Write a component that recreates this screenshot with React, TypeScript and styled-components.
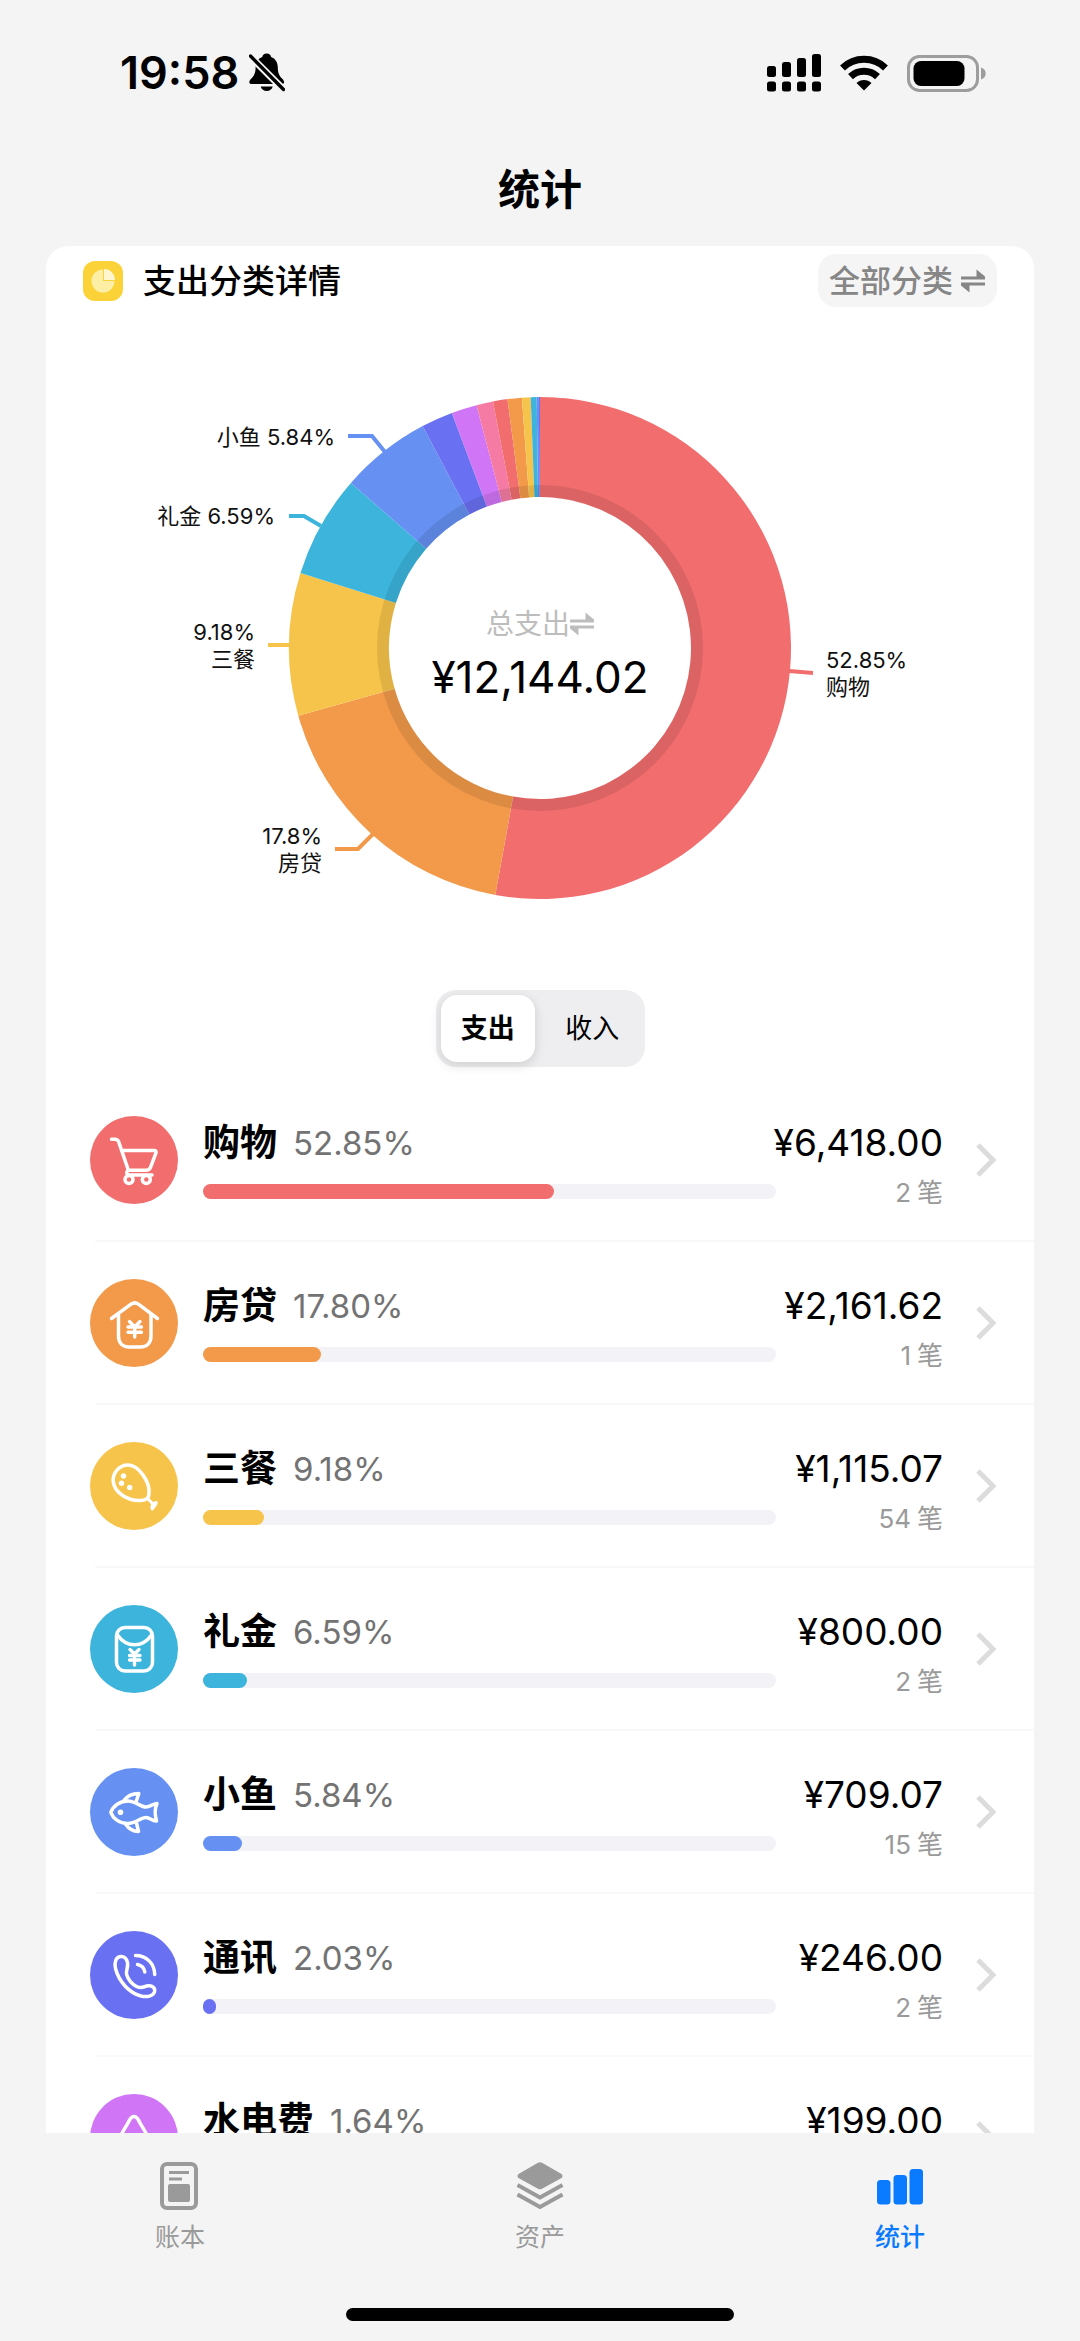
import React, { useState } from "react";
import styled, { createGlobalStyle } from "styled-components";

const colors = {
  page: "#f4f4f4",
  red: "#f26d6d",
  orange: "#f2994a",
  yellow: "#f7c44b",
  cyan: "#3cb4dc",
  blue: "#6690f2",
  indigo: "#6a70f2",
  purple: "#cf75f5",
  pink: "#f57ba4",
  active: "#0a7aff",
  muted: "#9a9a9a",
};

const fontStack = `"Inter", "Noto Sans CJK SC", sans-serif`;

const GlobalStyle = createGlobalStyle`
  *, *::before, *::after { box-sizing: border-box; }
  body { margin: 0; background: ${colors.page}; color: #000; font-family: ${fontStack}; }
  button { font: inherit; color: inherit; border: 0; padding: 0; background: none; cursor: pointer; }
  a { color: inherit; text-decoration: none; }
  h1, h2, p { margin: 0; }
  svg { display: block; }
`;

const Screen = styled.div`
  display: flex;
  flex-direction: column;
  height: 100vh;
  background: ${colors.page};
`;

/* ---------- status bar ---------- */

const StatusBar = styled.div`
  display: flex;
  align-items: center;
  justify-content: space-between;
  height: 146px;
  padding: 0 94px 0 120px;
`;

const StatusGroup = styled.div<{ $gap: number }>`
  display: flex;
  align-items: center;
  gap: ${(p) => p.$gap}px;
`;

const Clock = styled.span`
  font-size: 45px;
  line-height: 54px;
  font-weight: 600;
`;

const BellOffIcon = () => (
  <svg width="36" height="40" viewBox="0 0 36 40" aria-hidden="true">
    <path
      d="M17.7 0.5c-2.6 0-4 1.5-4.4 3.4C9 5.5 6.6 9.4 6.6 14.200c0 6-1.600 8.500-4.200 11.400C.9 27.200.3 28.300.3 29.200c0 1 .8 1.700 2 1.700h30.800c1.200 0 2-.7 2-1.700 0-.9-.6-2-2.100-3.600-2.600-2.900-4.200-5.400-4.200-11.400 0-4.800-2.400-8.700-6.700-10.300C21.700 2 20.300.5 17.700.5z"
      fill="#000"
    />
    <path d="M11.700 33.500h12c-.8 2.800-3 4.500-6 4.500s-5.200-1.700-6-4.500z" fill="#000" />
    <path d="M-1 1L37 39" stroke={colors.page} strokeWidth="7" />
    <path d="M1.500 3L34.500 36.500" stroke="#000" strokeWidth="3.400" strokeLinecap="round" />
  </svg>
);

const SignalIcon = () => (
  <svg width="54" height="38" viewBox="0 0 54 38" aria-hidden="true">
    {[0, 1, 2, 3].map((i) => {
      const height = [11, 15, 19, 23][i];
      return (
        <g key={i}>
          <rect x={i * 15} y={23 - height} width="9" height={height} rx="2.500" />
          <rect x={i * 15} y="27.500" width="9" height="10" rx="2.500" />
        </g>
      );
    })}
  </svg>
);

const WifiIcon = () => (
  <svg width="48" height="36" viewBox="0 0 48 36" aria-hidden="true">
    <g fill="none" stroke="#000" strokeWidth="7">
      <path d="M2.500 13A31 31 0 0 1 45.500 13" />
      <path d="M10.500 21.600A19.500 19.500 0 0 1 37.500 21.600" />
    </g>
    <path d="M24 35.500L16.500 28a10.600 10.600 0 0 1 15 0z" />
  </svg>
);

const BatteryIcon = () => (
  <svg width="79" height="37" viewBox="0 0 79 37" aria-hidden="true">
    <rect x="1.500" y="1.500" width="69" height="34" rx="11" fill="none" stroke="#9d9d9d" strokeWidth="3" />
    <rect x="6.500" y="6" width="51" height="25" rx="7.500" />
    <path d="M74 12.500c3 1 4.700 3 4.700 6s-1.700 5-4.700 6z" fill="#9d9d9d" />
  </svg>
);

/* ---------- title ---------- */

const TitleBar = styled.header`
  display: flex;
  align-items: center;
  justify-content: center;
  height: 100px;
  padding-bottom: 12px;
`;

const Title = styled.h1`
  font-size: 42px;
  line-height: 60px;
  font-weight: 600;
`;

/* ---------- card ---------- */

const Content = styled.main`
  flex: 1;
  min-height: 0;
  margin: 0 46px;
  overflow-y: auto;
  scrollbar-width: none;
  border-radius: 22px 22px 0 0;
  background: #fff;
`;

const CardHeader = styled.div`
  display: flex;
  align-items: center;
  gap: 20px;
  padding: 8px 37px 0;
`;

const CardTitle = styled.h2`
  flex: 1;
  font-size: 33px;
  line-height: 44px;
  font-weight: 500;
`;

const FilterButton = styled.button`
  display: flex;
  align-items: center;
  gap: 8px;
  height: 53px;
  padding: 0 12px 0 11px;
  border-radius: 18px;
  background: #f5f5f5;
  color: #868686;
  font-size: 31px;
  line-height: 40px;
  font-weight: 500;
`;

const PieBadge = () => (
  <svg width="40" height="40" viewBox="0 0 40 40" aria-hidden="true">
    <rect width="40" height="40" rx="12" fill="#fbd338" />
    <path d="M20 8.500a11.500 11.500 0 1 0 11.500 11.500H20z" fill="#fdeea6" />
    <path d="M21 8V19H32A11 11 0 0 0 21 8z" fill="#fff6cf" />
  </svg>
);

const SwapIcon = () => (
  <svg width="24" height="24" viewBox="0 0 24 24" fill="currentColor" aria-hidden="true">
    <path d="M0 7.500H15.500V0.500L24 7.500V10.500H0z" />
    <path d="M24 16.500H8.500V23.500L0 16.500V13.500H24z" />
  </svg>
);

/* ---------- donut chart ---------- */

const slices = [
  { value: 52.85, color: colors.red },
  { value: 17.8, color: colors.orange },
  { value: 9.18, color: colors.yellow },
  { value: 6.59, color: colors.cyan },
  { value: 5.84, color: colors.blue },
  { value: 2.03, color: colors.indigo },
  { value: 1.64, color: colors.purple },
  { value: 1.07, color: colors.pink },
  { value: 0.93, color: colors.red },
  { value: 0.92, color: colors.orange },
  { value: 0.56, color: colors.yellow },
  { value: 0.38, color: colors.cyan },
  { value: 0.14, color: colors.blue },
  { value: 0.07, color: colors.indigo },
];

const CX = 494;
const CY = 341;
const OUTER = 251;
const INNER = 151;

const polar = (radius: number, percent: number) => {
  const angle = (percent / 100) * Math.PI * 2;
  return `${CX + radius * Math.sin(angle)} ${CY - radius * Math.cos(angle)}`;
};

const arcPath = (start: number, end: number) => {
  const large = end - start > 50 ? 1 : 0;
  return [
    `M${polar(OUTER, start)}`,
    `A${OUTER} ${OUTER} 0 ${large} 1 ${polar(OUTER, end)}`,
    `L${polar(INNER, end)}`,
    `A${INNER} ${INNER} 0 ${large} 0 ${polar(INNER, start)}Z`,
  ].join("");
};

const callouts = [
  { line: "M743 364L767 366", color: colors.red, x: 780, anchor: "start", rows: [["52.85%", 361], ["购物", 388]] },
  { line: "M327 527L312 542H289", color: colors.orange, x: 276, anchor: "end", rows: [["17.8%", 537], ["房贷", 564]] },
  { line: "M244 338H222", color: colors.yellow, x: 209, anchor: "end", rows: [["9.18%", 333], ["三餐", 360]] },
  { line: "M275 219L258 209H243", color: colors.cyan, x: 229, anchor: "end", rows: [["礼金 6.59%", 217]] },
  { line: "M339 145L326 129H302", color: colors.blue, x: 289, anchor: "end", rows: [["小鱼 5.84%", 138]] },
] as const;

const ChartArea = styled.div`
  position: relative;
`;

const ChartSvg = styled.svg`
  width: 100%;
  height: auto;
`;

const CalloutText = styled.text`
  font-family: ${fontStack};
  font-size: 22px;
  fill: #111;
`;

const ChartCenter = styled.div`
  position: absolute;
  inset: 0;
  display: flex;
  flex-direction: column;
  align-items: center;
  justify-content: center;
  gap: 10px;
  padding-top: 10px;
`;

const TotalToggle = styled.button`
  display: flex;
  align-items: center;
  color: #bdbdbd;
  font-size: 28px;
  line-height: 36px;
`;

const TotalAmount = styled.p`
  font-size: 44px;
  line-height: 50px;
`;

function DonutChart() {
  let cursor = 0;
  return (
    <ChartArea>
      <ChartSvg viewBox="0 0 988 683" role="img" aria-label="支出分类">
        {slices.map((slice, i) => {
          const start = cursor;
          cursor += slice.value;
          return <path key={i} d={arcPath(start, cursor)} fill={slice.color} />;
        })}
        <circle cx={CX} cy={CY} r="157" fill="none" stroke="#000" strokeOpacity="0.090" strokeWidth="12" />
        {callouts.map((callout) => (
          <g key={callout.color}>
            <path d={callout.line} fill="none" stroke={callout.color} strokeWidth="4" />
            {callout.rows.map(([label, y]) => (
              <CalloutText key={label} x={callout.x} y={y} textAnchor={callout.anchor}>
                {label}
              </CalloutText>
            ))}
          </g>
        ))}
      </ChartSvg>
      <ChartCenter>
        <TotalToggle type="button">
          总支出
          <SwapIcon />
        </TotalToggle>
        <TotalAmount>¥12,144.02</TotalAmount>
      </ChartCenter>
    </ChartArea>
  );
}

/* ---------- segmented control ---------- */

const Segments = styled.div`
  display: flex;
  gap: 10px;
  width: 209px;
  height: 77px;
  margin: 0 auto 12px;
  padding: 5px;
  border-radius: 20px;
  background: #eeeef0;
`;

const Segment = styled.button<{ $on: boolean }>`
  flex: 1;
  border-radius: 16px;
  background: ${(p) => (p.$on ? "#fff" : "transparent")};
  box-shadow: ${(p) => (p.$on ? "0 3px 12px rgba(0, 0, 0, 0.14)" : "none")};
  font-size: 27px;
  line-height: 36px;
  font-weight: ${(p) => (p.$on ? 600 : 400)};
`;

/* ---------- category list ---------- */

const List = styled.ul`
  margin: 0;
  padding: 0;
  list-style: none;
`;

const Row = styled.a`
  display: grid;
  grid-template-columns: 88px minmax(0, 1fr) 167px 53px;
  grid-template-rows: 88px;
  padding: 37px 38px 36px 44px;
`;

const Divider = styled.div`
  height: 2px;
  margin-left: 49px;
  background: #f9f9fa;
`;

const IconDisc = styled.span<{ $color: string }>`
  display: block;
  width: 88px;
  height: 88px;
  border-radius: 50%;
  background: ${(p) => p.$color};
`;

const Details = styled.div`
  display: flex;
  flex-direction: column;
  gap: 19px;
  padding: 5px 0 0 25px;
`;

const NameLine = styled.div`
  display: flex;
  align-items: center;
  gap: 16px;
  line-height: 44px;
  white-space: nowrap;
`;

const Name = styled.span`
  font-size: 37px;
  font-weight: 600;
`;

const Percent = styled.span`
  font-size: 33px;
  color: #737373;
`;

const Track = styled.div`
  height: 15px;
  border-radius: 8px;
  background: #f3f3f7;
`;

const Fill = styled.div<{ $color: string }>`
  height: 100%;
  border-radius: 8px;
  background: ${(p) => p.$color};
`;

const Totals = styled.div`
  display: flex;
  flex-direction: column;
  align-items: flex-end;
  gap: 14px;
  padding-top: 5px;
  white-space: nowrap;
`;

const Amount = styled.span`
  font-size: 37px;
  line-height: 44px;
`;

const Count = styled.span`
  display: flex;
  gap: 6px;
  font-size: 26px;
  line-height: 28px;
  color: ${colors.muted};
`;

const ChevronSvg = styled.svg`
  align-self: center;
  justify-self: end;
`;

const Chevron = () => (
  <ChevronSvg width="20" height="34" viewBox="0 0 20 34" aria-hidden="true">
    <path d="M2 2L17 17L2 32" fill="none" stroke="#dcdcdc" strokeWidth="5" />
  </ChevronSvg>
);

const glyphs: Record<string, React.ReactNode> = {
  cart: (
    <>
      <path d="M21.500 23.300H25c2 0 3 .8 3.700 2.600L38.400 54.300H56c2.300 0 3.700-.9 4.500-3l5.400-14.200c.6-1.600-.1-2.600-1.700-2.600H32" />
      <path d="M38.500 54.300c-2.500 1.200-2.200 4.700.8 4.700H62" />
      <circle cx="39" cy="63.500" r="4" />
      <circle cx="56.300" cy="63.500" r="4" />
    </>
  ),
  house: (
    <>
      <path d="M21.500 39.500L41 25.200c2.500-1.800 5-1.800 7.400 0L67.500 39.500" />
      <path d="M28.500 36V57c0 7 4 11 10.500 11h11.500c6.500 0 10.500-4 10.500-11V36" />
      <path d="M39.500 42.500L44.700 48L50 42.500M38 48H51.500M38 53.200H51.500M44.700 48V58" strokeWidth="3.400" />
    </>
  ),
  drumstick: (
    <>
      <path d="M23.300 40C22 31 30 22.500 38.500 23C49 23.600 58.500 39 59 48C59.300 55 58.500 57.500 51 58.500C38 59.500 24.500 50.500 23.300 40z" />
      <path d="M58 57L63 62M66.200 60.500C67 63 63.500 64 62.300 67C61.500 66 62 64 62.600 62.200z" strokeWidth="3" />
      <g fill="#fff" stroke="none">
        <circle cx="33.500" cy="34" r="2.700" />
        <circle cx="31.500" cy="41.200" r="2.700" />
        <circle cx="39.700" cy="45.500" r="2.700" />
      </g>
    </>
  ),
  envelope: (
    <>
      <rect x="26.500" y="22.500" width="36" height="43.500" rx="8.500" />
      <path d="M27.500 30C32 36.500 38 39.800 44.500 39.800S57 36.500 61.500 30" />
      <path d="M40 44.500L44.500 49L49 44.500M39.500 50.500H50M39.500 55H50M44.500 49V60" strokeWidth="3.400" />
    </>
  ),
  fish: (
    <>
      <path d="M20.800 44.300C23.500 37 30.500 33 38 33C45.500 33 50.500 39 56 39C60 39 63.500 35.500 67 35.500C64.500 41 64.800 47 66.500 53C62.500 53.500 60 49.500 56 49.500C50.500 49.500 46 55.500 37.500 55.500C30 55.500 23 51 20.800 44.300z" />
      <path d="M33.500 33C37 28 42 25.500 48.800 25.500L46 34" />
      <path d="M35.500 56C38.500 60.500 42.500 63.300 48.500 63.500L46.500 55" />
      <circle cx="30.500" cy="44.300" r="2.800" fill="#fff" stroke="none" />
    </>
  ),
  phone: (
    <>
      <path d="M30.500 25.500C26 26 24 31.500 25.500 37.500C29 51 39.500 62 51 65C57.500 66.500 63 65 64.500 61C65.500 57 62.500 54.500 58.500 54.800C54 55.200 51 58 46.500 55.500C41 52.500 38 48 36.600 43.500C35.500 40 38.500 36.500 37.500 31.500C36.700 27.500 34 25 30.500 25.500z" />
      <path d="M45.500 24.500C56.500 24.500 64.500 32.500 64.700 43.500" />
      <path d="M47.500 33.500C51.500 34.300 54.200 37 54.800 41" />
    </>
  ),
  drop: <path d="M44 22.500C41 22.500 40 25 38.500 28C35 35 27.500 44 27.500 52A16.500 16.500 0 0 0 60.500 52C60.500 44 53 35 49.500 28C48 25 47 22.500 44 22.500z" />,
};

const CategoryGlyph = ({ name }: { name: string }) => (
  <svg
    width="88"
    height="88"
    viewBox="0 0 88 88"
    fill="none"
    stroke="#fff"
    strokeWidth="3.500"
    strokeLinecap="round"
    strokeLinejoin="round"
    aria-hidden="true"
  >
    {glyphs[name]}
  </svg>
);

const categories = [
  { name: "购物", percent: 52.85, amount: "6,418.00", count: 2, color: colors.red, glyph: "cart" },
  { name: "房贷", percent: 17.8, amount: "2,161.62", count: 1, color: colors.orange, glyph: "house" },
  { name: "三餐", percent: 9.18, amount: "1,115.07", count: 54, color: colors.yellow, glyph: "drumstick" },
  { name: "礼金", percent: 6.59, amount: "800.00", count: 2, color: colors.cyan, glyph: "envelope" },
  { name: "小鱼", percent: 5.84, amount: "709.07", count: 15, color: colors.blue, glyph: "fish" },
  { name: "通讯", percent: 2.03, amount: "246.00", count: 2, color: colors.indigo, glyph: "phone" },
  { name: "水电费", percent: 1.64, amount: "199.00", count: 2, color: colors.purple, glyph: "drop" },
];

const BAR_SCALE = 1.16;

/* ---------- tab bar ---------- */

const TabBar = styled.nav`
  display: flex;
  flex-direction: column;
  justify-content: space-between;
  align-items: center;
  height: 208px;
  padding: 25px 0 20px;
`;

const Tabs = styled.div`
  display: flex;
  width: 100%;
`;

const Tab = styled.a<{ $active?: boolean }>`
  flex: 1;
  display: flex;
  flex-direction: column;
  align-items: center;
  gap: 7px;
  color: ${(p) => (p.$active ? colors.active : colors.muted)};
  font-size: 25px;
  line-height: 32px;
  font-weight: ${(p) => (p.$active ? 500 : 400)};
`;

const HomeIndicator = styled.div`
  width: 36%;
  height: 13px;
  border-radius: 7px;
  background: #000;
`;

const LedgerIcon = () => (
  <svg width="56" height="56" viewBox="0 0 56 56" aria-hidden="true">
    <rect x="10" y="6" width="34" height="44" rx="5" fill="none" stroke="currentColor" strokeWidth="4" />
    <path d="M17 14.500H37M17 21H30" stroke="currentColor" strokeWidth="3" />
    <rect x="16" y="26" width="22" height="18" rx="2" fill="currentColor" />
  </svg>
);

const LayersIcon = () => (
  <svg width="56" height="56" viewBox="0 0 56 56" aria-hidden="true">
    <path d="M26 4.700q2-1 4 0L49.500 16q2 2 0 4L30 30.800q-2 1-4 0L6.500 20q-2-2 0-4z" fill="currentColor" />
    <path d="M5.500 27L28 39.500L50.500 27M5.500 36.500L28 49L50.500 36.500" fill="none" stroke="currentColor" strokeWidth="4" />
  </svg>
);

const BarsIcon = () => (
  <svg width="56" height="56" viewBox="0 0 56 56" fill="currentColor" aria-hidden="true">
    <rect x="5" y="22" width="13.500" height="24.500" rx="3.500" />
    <rect x="21.500" y="17" width="13.500" height="29.500" rx="3.500" />
    <rect x="37.500" y="11" width="13.500" height="35.500" rx="3.500" />
  </svg>
);

export default function App() {
  const [mode, setMode] = useState("支出");

  return (
    <Screen>
      <GlobalStyle />
      <StatusBar>
        <StatusGroup $gap={10}>
          <Clock>19:58</Clock>
          <BellOffIcon />
        </StatusGroup>
        <StatusGroup $gap={19}>
          <SignalIcon />
          <WifiIcon />
          <BatteryIcon />
        </StatusGroup>
      </StatusBar>

      <TitleBar>
        <Title>统计</Title>
      </TitleBar>

      <Content>
        <CardHeader>
          <PieBadge />
          <CardTitle>支出分类详情</CardTitle>
          <FilterButton type="button">
            全部分类
            <SwapIcon />
          </FilterButton>
        </CardHeader>

        <DonutChart />

        <Segments role="group" aria-label="类型">
          {["支出", "收入"].map((label) => (
            <Segment
              key={label}
              type="button"
              $on={mode === label}
              aria-pressed={mode === label}
              onClick={() => setMode(label)}
            >
              {label}
            </Segment>
          ))}
        </Segments>

        <List>
          {categories.map((item) => (
            <li key={item.name}>
              <Row href={`#${item.glyph}`}>
                <IconDisc $color={item.color}>
                  <CategoryGlyph name={item.glyph} />
                </IconDisc>
                <Details>
                  <NameLine>
                    <Name>{item.name}</Name>
                    <Percent>{item.percent.toFixed(2)}%</Percent>
                  </NameLine>
                  <Track>
                    <Fill $color={item.color} style={{ width: `${item.percent * BAR_SCALE}%` }} />
                  </Track>
                </Details>
                <Totals>
                  <Amount>¥{item.amount}</Amount>
                  <Count>
                    <span>{item.count}</span>
                    <span>笔</span>
                  </Count>
                </Totals>
                <Chevron />
              </Row>
              <Divider />
            </li>
          ))}
        </List>
      </Content>

      <TabBar>
        <Tabs>
          <Tab href="#ledger">
            <LedgerIcon />
            账本
          </Tab>
          <Tab href="#assets">
            <LayersIcon />
            资产
          </Tab>
          <Tab href="#stats" $active aria-current="page">
            <BarsIcon />
            统计
          </Tab>
        </Tabs>
        <HomeIndicator />
      </TabBar>
    </Screen>
  );
}
